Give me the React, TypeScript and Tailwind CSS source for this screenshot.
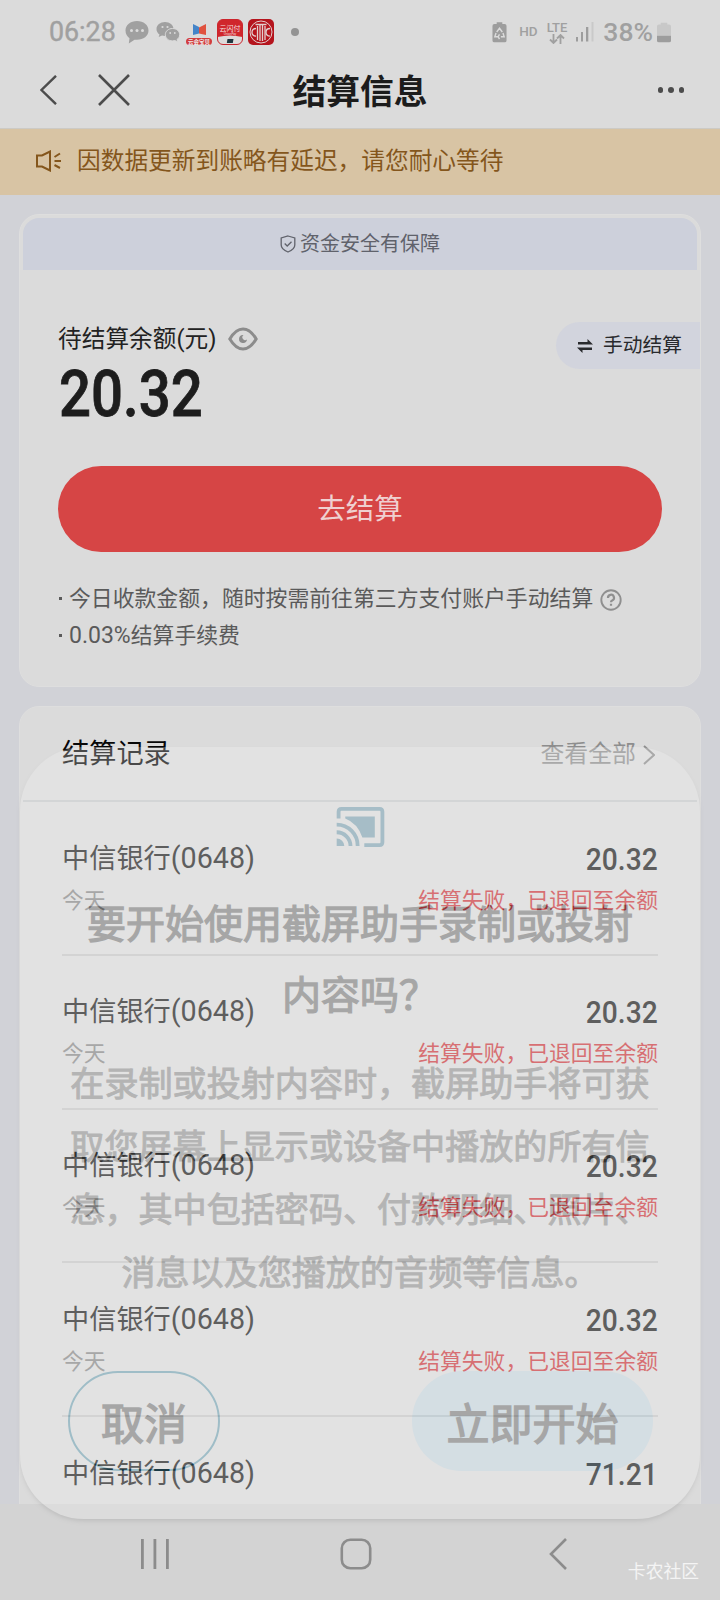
interface SettlementRecord {
  id: number;
  bank: string;
  card: string;
  amount: string;
  date: string;
  status: string;
}

const FAILED = "结算失败，已退回至余额";

const records: SettlementRecord[] = [
  { id: 1, bank: "中信银行", card: "(0648)", amount: "20.32", date: "今天", status: FAILED },
  { id: 2, bank: "中信银行", card: "(0648)", amount: "20.32", date: "今天", status: FAILED },
  { id: 3, bank: "中信银行", card: "(0648)", amount: "20.32", date: "今天", status: FAILED },
  { id: 4, bank: "中信银行", card: "(0648)", amount: "20.32", date: "今天", status: FAILED },
  { id: 5, bank: "中信银行", card: "(0648)", amount: "71.21", date: "今天", status: FAILED },
];

function StatusBar() {
  return (
    <div className="flex h-16 shrink-0 items-center pl-[49px] pr-[49px] text-[#a0a0a0]">
      <span className="w-[76px] text-[26.8px] leading-none [-webkit-text-stroke:0.4px]">06:28</span>
      {/* message bubble */}
      <svg className="h-6 w-6 shrink-0" viewBox="0 0 24 24" fill="currentColor">
        <path d="M12 1C5.5 1 .5 5 .5 10.500c0 3.500 1.700 6 4 7.700l-.7 5.300 5.700-3.800 2.500.1c6.500 0 11.500-3.800 11.500-9.300S18.500 1 12 1z" />
        <g fill="#dbdbdb">
          <circle cx="6.500" cy="10.500" r="1.500" />
          <circle cx="12" cy="10.500" r="1.500" />
          <circle cx="17.500" cy="10.500" r="1.500" />
        </g>
      </svg>
      {/* wechat */}
      <svg className="ml-[7px] h-6 w-6 shrink-0" viewBox="0 0 24 24" fill="currentColor">
        <path d="M9 2C4.300 2 .5 5 .5 9c0 2.300 1.100 4.200 3 5.500l-.8 2.600 3.300-1.600 3 .4C13.800 15.900 17.500 13 17.500 9S13.700 2 9 2z" />
        <path stroke="#dbdbdb" strokeWidth="1" d="M16.500 8.500c4 0 7.200 2.700 7.200 6.200 0 2-1 3.600-2.600 4.700l.6 2.500-2.800-1.300c-.8.2-1.600.3-2.400.3-4 0-7.200-2.700-7.200-6.200s3.200-6.200 7.200-6.200z" />
        <g fill="#dbdbdb">
          <circle cx="6.500" cy="7" r="1.100" />
          <circle cx="11.500" cy="7" r="1.100" />
          <circle cx="14.200" cy="13" r=".9" />
          <circle cx="18.800" cy="13" r=".9" />
        </g>
      </svg>
      <svg className="ml-[6px] h-[26px] w-[26px] shrink-0" viewBox="0 0 26 26">
        <path fill="#4484c8" d="M7 5l6 3v6.500L7 16z" />
        <path fill="#e0523f" d="M20 5l-7 3.500v6l7 1.500z" />
        <rect x="0" y="19" width="26" height="7" rx="3.500" fill="#d33c3c" />
        <text x="13" y="24.800" textAnchor="middle" fontSize="5.500" fontWeight="700" fill="#eee">云会宝贝</text>
      </svg>
      <svg className="ml-[5px] h-[26px] w-[26px] shrink-0" viewBox="0 0 26 26">
        <rect x=".5" y=".5" width="25" height="25" rx="5.500" fill="#dedada" stroke="#c9252d" />
        <path fill="#d0262c" d="M6 .5h14a5.500 5.500 0 0 1 5.500 5.500v12q-12.500-3-25 0V6A5.500 5.500 0 0 1 6 .5z" />
        <text x="13" y="11.500" textAnchor="middle" fontSize="7" fill="#f2dede">云闪付</text>
        <text x="13" y="15.500" textAnchor="middle" fontSize="3" fill="#f2dede">UnionPay</text>
        <path fill="#20363f" d="M10.500 20h6l-.7 4h-6z" />
      </svg>
      <svg className="ml-[5px] h-[26px] w-[26px] shrink-0" viewBox="0 0 26 26">
        <rect width="26" height="26" rx="5" fill="#b5141d" />
        <g fill="none" stroke="#e3cfcf">
          <circle cx="13" cy="13" r="11" strokeWidth="1" />
          <path strokeWidth="1.300" d="M8 9.500q-4 0-4 3.800t4 3.800M22 9.500q-4 0-4 3.800t4 3.800" />
          <path strokeWidth="1.300" d="M9.500 7v14M12 5.500v16.500M14.500 5.500v16.500M17 7v14M7.500 5.500h11" />
        </g>
      </svg>
      <span className="ml-[17px] h-2 w-2 rounded-full bg-[#949494]" />

      <div className="ml-auto flex items-center">
        <svg className="h-[21px] w-[15px]" viewBox="0 0 16 22">
          <path fill="#9d9d9d" d="M5 0h6v2h2.500A2 2 0 0 1 15.500 4v15.500a2 2 0 0 1-2 2h-11a2 2 0 0 1-2-2V4a2 2 0 0 1 2-2H5z" />
          <path fill="none" stroke="#dbdbdb" strokeWidth="1.500" d="M5 10.500L8 6.500l3 4M4.300 11.500l-1.300 4h3.500M11.700 11.500l1.300 4H9.500M8 13l-1.500 2.500L8 18" />
        </svg>
        <span className="ml-[12px] text-[13.500px] font-medium leading-none">HD</span>
        <span className="ml-[9px] flex flex-col items-center text-[13px] font-medium leading-none">
          LTE
          <svg className="h-[10px] w-4" viewBox="0 0 16 10" fill="none" stroke="currentColor" strokeWidth="1.800">
            <path d="M4.500 0v9M1 5.500L4.500 9 8 5.500M11.500 10V1M8 4.500L11.500 1 15 4.500" />
          </svg>
        </span>
        <svg className="ml-[9px] h-5 w-[18px]" viewBox="0 0 18 20">
          <g fill="#9d9d9d">
            <rect x="0" y="15" width="2" height="4.500" />
            <rect x="5" y="10" width="2" height="9.500" />
            <rect x="10" y="5" width="2.300" height="14.500" />
          </g>
          <rect x="15.500" y="0" width="2" height="19.500" fill="#c9c9c9" />
        </svg>
        <span className="ml-[9px] text-[26.500px] font-medium leading-none">38%</span>
        <svg className="ml-[4px] h-[21px] w-[14px]" viewBox="0 0 15 21">
          <path fill="#c8c8c8" d="M4 0h7v2h2a2 2 0 0 1 2 2v10H0V4a2 2 0 0 1 2-2h2z" />
          <path fill="#9d9d9d" d="M0 14h15v5a2 2 0 0 1-2 2H2a2 2 0 0 1-2-2z" />
        </svg>
      </div>
    </div>
  );
}

function PageHeader() {
  return (
    <header className="flex h-[65px] shrink-0 items-center border-b border-[#cccac5] pb-[12px]">
      <div className="flex w-[200px] items-center pl-[40px]">
        <svg className="h-[30px] w-[17px]" viewBox="0 0 17 30" fill="none" stroke="#4c4c4c" strokeWidth="2.400">
          <path d="M16 .8L1.500 15 16 29.200" />
        </svg>
        <svg className="ml-[41px] h-8 w-8" viewBox="0 0 32 32" fill="none" stroke="#4c4c4c" strokeWidth="2.600">
          <path d="M1 1l30 30M31 1L1 31" />
        </svg>
      </div>
      <h1 className="flex-1 pt-[5px] text-center text-[33.800px] font-bold leading-none text-[#1c1c1c]">结算信息</h1>
      <div className="flex w-[200px] justify-end gap-[5px] pr-[36px]">
        <span className="h-[5.500px] w-[5.500px] rounded-full bg-[#4c4c4c]" />
        <span className="h-[5.500px] w-[5.500px] rounded-full bg-[#4c4c4c]" />
        <span className="h-[5.500px] w-[5.500px] rounded-full bg-[#4c4c4c]" />
      </div>
    </header>
  );
}

function NoticeBar() {
  return (
    <div className="flex h-[66px] shrink-0 items-center bg-[#d8c4a4] pb-[2px] pl-9 text-[#84561c]">
      <svg className="h-[22px] w-[26px]" viewBox="0 0 26 22" fill="none" stroke="currentColor" strokeWidth="2">
        <path d="M1 5.500h5L14 1.500v19l-8-4H1zM18.500 7l5.500-3.500M18.500 11H25M18.500 15l5.500 3" />
      </svg>
      <span className="ml-[15px] pt-px text-[23.700px] leading-none">因数据更新到账略有延迟，请您耐心等待</span>
    </div>
  );
}

function BalanceCard() {
  return (
    <section className="mx-[19px] mt-[19px] h-[473px] shrink-0 rounded-[20px] border border-[#dedede] bg-[#dbdbdb] pt-[3px]">
      <div className="mx-[3px] flex h-[52px] items-center justify-center gap-1 rounded-t-[16px] bg-[#cdd0db] text-[#60626b]">
        <svg className="h-[18px] w-4" viewBox="0 0 16 18" fill="none" stroke="currentColor" strokeWidth="1.300">
          <path d="M8 1l6.800 2v7c0 3-3 5.500-6.800 7C4.200 15.500 1.200 13 1.200 10V3zM4.700 8.500l2.500 2.500 4.300-4.300" />
        </svg>
        <span className="text-[20px] leading-none">资金安全有保障</span>
      </div>

      <div className="flex h-[100px] items-start justify-between pl-[38px] pt-[52px]">
        <div className="flex items-center pt-[4px] text-[#222]">
          <span className="text-[23.700px] leading-[26px]">待结算余额(元)</span>
          <svg className="ml-[12px] h-6 w-[30px]" viewBox="0 0 30 24" fill="none" stroke="#8c8c8c">
            <path strokeWidth="3" d="M1.800 12C6 5 10 2 15 2s9 3 13.200 10C24 19 20 22 15 22S6 19 1.800 12z" />
            <path fill="#8c8c8c" stroke="none" d="M15.500 8a4 4 0 1 0 3.500 4.500 2.300 2.300 0 0 1-3.500-4.500z" />
          </svg>
        </div>
        <div className="flex h-[47px] w-[144px] items-center rounded-l-full bg-[#d2d4dd] pl-[21px] text-[#292a2d]">
          <svg className="h-[14px] w-4" viewBox="0 0 16 14" fill="currentColor">
            <path d="M1 3h9.500V0L16 5.600H1zM15 11H5.500v3L0 8.400h15z" />
          </svg>
          <span className="ml-[10px] text-[19.800px] leading-none">手动结算</span>
        </div>
      </div>

      <div className="h-[96px] pl-[39px] pt-px">
        <span className="inline-block origin-left scale-x-[0.88] text-[64px] font-medium leading-[48px] text-[#1d1d1d] [-webkit-text-stroke:0.8px]">
          20.32
        </span>
      </div>

      <button className="mx-[38px] flex h-[86px] w-[604px] items-center justify-center rounded-full bg-[#d64545] pt-[2px] text-[28.500px] leading-none text-[#efd0d0]">
        去结算
      </button>

      <ul className="mt-[28px] pl-[38px] text-[21.850px] leading-[37px] text-[#5a5a5a]">
        <li className="flex items-center">
          <i className="ml-px mr-[7px] h-[3px] w-[3px] bg-[#5a5a5a]" />
          今日收款金额，随时按需前往第三方支付账户手动结算
          <svg className="ml-[7px] mt-[2px] h-[22px] w-[22px]" viewBox="0 0 22 22" fill="none" stroke="#8f8f8f" strokeWidth="1.900">
            <circle cx="11" cy="11" r="9.700" />
            <path strokeWidth="2.200" d="M8 9a3 3 0 1 1 4.200 2.500Q11 12 11 13.300M11 14.800v2" />
          </svg>
        </li>
        <li className="flex items-center">
          <i className="ml-px mr-[7px] h-[3px] w-[3px] bg-[#5a5a5a]" />
          <span className="text-[23px] leading-[36px]">0.03%</span>
          结算手续费
        </li>
      </ul>
    </section>
  );
}

function RecordRow({ record }: { record: SettlementRecord }) {
  return (
    <li className="mx-[42px] h-[153.800px] border-b-2 border-[#c6c7c7] pt-[37.500px]">
      <div className="flex items-center justify-between text-[27.200px] leading-[38px] text-[#262626]">
        <span>
          {record.bank}
          <span className="text-[28.700px] leading-none">{record.card}</span>
        </span>
        <span className="origin-right scale-x-[0.88] text-[32px] font-medium">{record.amount}</span>
      </div>
      <div className="mt-[4px] flex items-center justify-between text-[21.800px] leading-[38px]">
        <span className="text-[#8a8a8a]">{record.date}</span>
        <span className="text-[#cc3d42]">{record.status}</span>
      </div>
    </li>
  );
}

function RecordsCard() {
  return (
    <section className="mx-[19px] mt-[19px] rounded-t-[20px] border border-[#dedede] bg-[#dbdbdb]">
      <div className="mx-[3px] flex h-[95px] items-center justify-between border-b-2 border-[#c6c9ca] pl-[39px] pr-[38px] pt-[3px]">
        <h2 className="text-[27.200px] leading-none text-[#080808]">结算记录</h2>
        <div className="flex items-center text-[#8d8d8d]">
          <span className="text-[23.900px] leading-none">查看全部</span>
          <svg className="ml-[7px] mr-[4px] h-5 w-3" viewBox="0 0 12 20" fill="none" stroke="currentColor" strokeWidth="2">
            <path d="M1 1l10 9-10 9" />
          </svg>
        </div>
      </div>
      <ul>
        {records.map((r) => (
          <RecordRow key={r.id} record={r} />
        ))}
      </ul>
    </section>
  );
}

// System dialog while it fades over the page and the navigation bar
function CastDialog() {
  return (
    <div className="absolute left-[20px] top-[747px] flex h-[772px] w-[680px] flex-col items-center rounded-[64px] bg-[#f6f6f6] pt-[60px] opacity-[0.27] shadow-[0_3px_4px_-1px_rgba(0,0,0,0.35)]">
      <svg className="h-[40px] w-[49px] shrink-0" viewBox="0 0 50 42" fill="none" stroke="#1a6f92" strokeWidth="4">
        <path d="M2 12V5q0-3 3-3h40q3 0 3 3v32q0 3-3 3H29" />
        <path d="M0 18.500A22 22 0 0 1 22 41M0 26.500A14.500 14.500 0 0 1 14.500 41" />
        <path fill="#1a6f92" stroke="none" d="M9 10h31v22H27Q22 17 9 12zM0 33a8 8 0 0 1 8 8H0z" />
      </svg>
      <h3 className="mt-[43px] text-center text-[39px] leading-[71px] text-[#1a1a1a] [-webkit-text-stroke:1.3px]">
        要开始使用截屏助手录制或投射
        <br />
        内容吗？
      </h3>
      <p className="mt-[21px] whitespace-nowrap text-center text-[34.100px] leading-[63px] text-[#505050] [-webkit-text-stroke:1px]">
        在录制或投射内容时，截屏助手将可获
        <br />
        取您屏幕上显示或设备中播放的所有信
        <br />
        息，其中包括密码、付款明细、照片、
        <br />
        消息以及您播放的音频等信息。
      </p>
      <div className="mt-[66px] flex w-full justify-between pl-[48px] pr-[47px] text-[43px] leading-none text-[#1a1a1a] [-webkit-text-stroke:1.500px]">
        <button className="flex h-[100px] w-[152px] items-center justify-center rounded-full border-2 border-[#006f94] pt-[8px]">
          取消
        </button>
        <button className="flex h-[100px] w-[241px] items-center justify-center rounded-full bg-[#c2e6fa] pt-[8px]">
          立即开始
        </button>
      </div>
    </div>
  );
}

function NavigationBar() {
  return (
    <nav className="flex h-24 shrink-0 items-center bg-[#d3d3d3] pl-[140px] pt-[4px] text-[#8c8c8c]">
      <svg className="h-[30px] w-[30px]" viewBox="0 0 30 30" fill="currentColor">
        <rect x="1" width="2.800" height="30" />
        <rect x="13.500" width="2.800" height="30" />
        <rect x="26" width="2.800" height="30" />
      </svg>
      <svg className="ml-[170px] h-8 w-8" viewBox="0 0 32 32" fill="none" stroke="currentColor" strokeWidth="2.600">
        <rect x="1.800" y="1.800" width="28.400" height="28.400" rx="8.500" />
      </svg>
      <svg className="ml-[177px] h-8 w-[18px]" viewBox="0 0 18 32" fill="none" stroke="currentColor" strokeWidth="2.600">
        <path d="M17 1L2 16l15 15" />
      </svg>
    </nav>
  );
}

export default function App() {
  return (
    <div className="relative flex h-[1600px] w-[720px] flex-col overflow-hidden bg-[#dbdbdb] font-[Roboto,'Noto_Sans_CJK_SC',sans-serif]">
      <StatusBar />
      <PageHeader />
      <NoticeBar />
      <main className="flex min-h-0 flex-1 flex-col overflow-hidden bg-[#d1d2d7]">
        <BalanceCard />
        <RecordsCard />
      </main>
      <NavigationBar />
      <CastDialog />
      <span className="absolute bottom-[19px] right-[21px] text-[17.800px] leading-none text-[#f4f4f4]">卡农社区</span>
    </div>
  );
}
